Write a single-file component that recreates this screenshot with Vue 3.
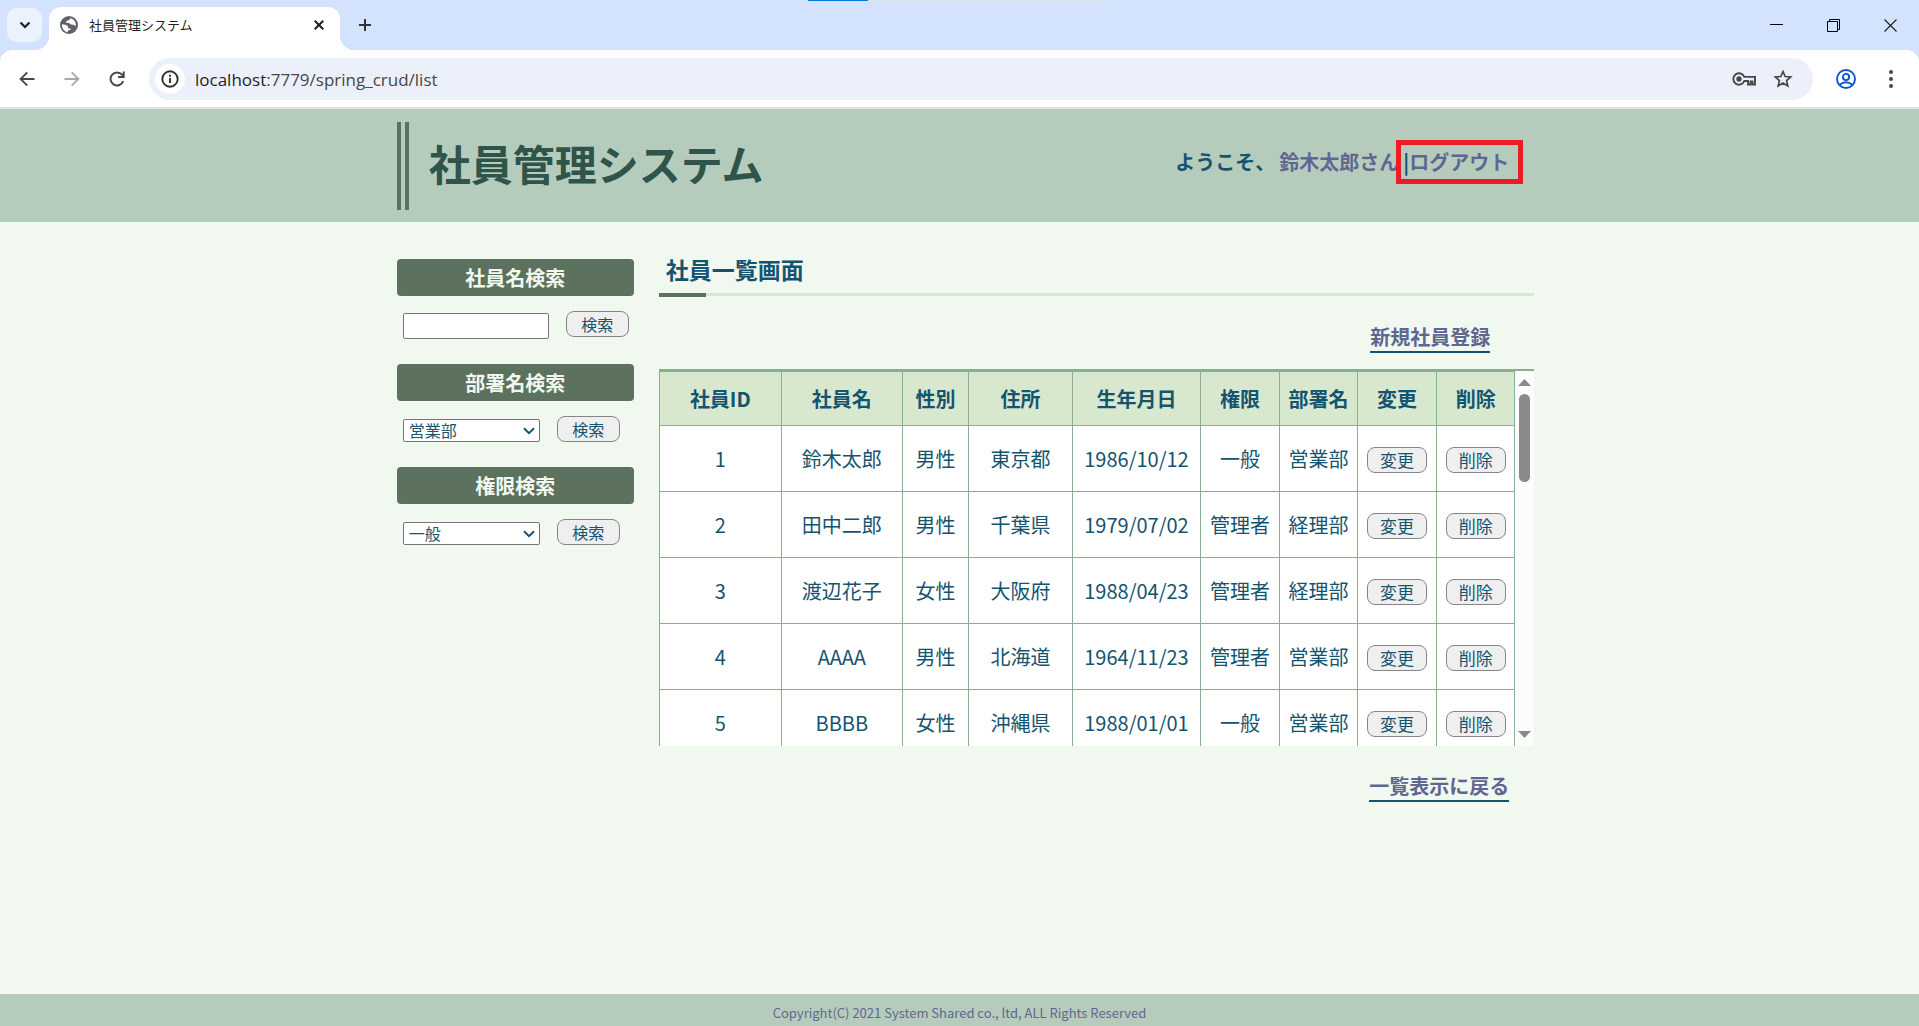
<script setup>
import { ref } from 'vue'

const columns = [
  { label: '社員ID', width: 122 },
  { label: '社員名', width: 121 },
  { label: '性別', width: 66 },
  { label: '住所', width: 104 },
  { label: '生年月日', width: 128 },
  { label: '権限', width: 79 },
  { label: '部署名', width: 78 },
  { label: '変更', width: 79 },
  { label: '削除', width: 78 },
]

const employees = [
  ['1', '鈴木太郎', '男性', '東京都', '1986/10/12', '一般', '営業部'],
  ['2', '田中二郎', '男性', '千葉県', '1979/07/02', '管理者', '経理部'],
  ['3', '渡辺花子', '女性', '大阪府', '1988/04/23', '管理者', '経理部'],
  ['4', 'AAAA', '男性', '北海道', '1964/11/23', '管理者', '営業部'],
  ['5', 'BBBB', '女性', '沖縄県', '1988/01/01', '一般', '営業部'],
]

const name = ref('')
const department = ref('営業部')
const authority = ref('一般')
</script>

<template>
  <div class="window">
    <div class="tabstrip">
      <div class="loading"><span></span></div>
      <button class="tab-search" aria-label="タブを検索">
        <svg width="12" height="8" viewBox="0 0 12 8"><path d="M1.5 1.5 6 6l4.500-4.500" fill="none" stroke="#1f1f1f" stroke-width="2.200" /></svg>
      </button>
      <div class="tab">
        <svg class="favicon" width="18" height="18" viewBox="0 0 18 18">
          <circle cx="9" cy="9" r="9" fill="#5f6368" />
          <path d="M10.500 2.200 9 4.200 6.500 4.800 6 6.800l3 .2 2 1.500 2.300.3 2.600 1.200a7.200 7.200 0 0 0-5.400-7.800z" fill="#fff" />
          <path d="M2 8.200l3.500.5 2.500 1.500v2l2.500.3v1.300l-2.300.7-.8 1.700A7.200 7.200 0 0 1 2 8.200z" fill="#fff" />
        </svg>
        <span class="tab-title">社員管理システム</span>
        <button class="plain" aria-label="タブを閉じる">
          <svg width="10" height="10" viewBox="0 0 10 10"><path d="M.7.7l8.600 8.600M9.300.7.700 9.300" stroke="#1f1f1f" stroke-width="2" /></svg>
        </button>
      </div>
      <button class="plain new-tab" aria-label="新しいタブ">
        <svg width="12" height="12" viewBox="0 0 12 12"><path d="M6 0v12M0 6h12" stroke="#333" stroke-width="2" /></svg>
      </button>
      <div class="window-buttons">
        <button class="plain" aria-label="最小化">
          <svg width="13" height="13" viewBox="0 0 13 13"><path d="M0 5.500h13" stroke="#000" /></svg>
        </button>
        <button class="plain" aria-label="元に戻す">
          <svg width="13" height="13" viewBox="0 0 13 13"><path d="M.5 2.500h10v10H.5zM2.500 2.500v-2h10v10h-2" fill="none" stroke="#000" /></svg>
        </button>
        <button class="plain" aria-label="閉じる">
          <svg width="13" height="13" viewBox="0 0 13 13"><path d="M.5.5l12 12M12.500.5l-12 12" stroke="#222" stroke-width="1.200" /></svg>
        </button>
      </div>
    </div>

    <div class="toolbar">
      <div class="nav-buttons">
        <button class="plain" aria-label="戻る">
          <svg width="16" height="16" viewBox="0 0 16 16"><path d="M15.500 8H2M8.300 1.300 1.600 8l6.700 6.700" fill="none" stroke="#474747" stroke-width="1.900" /></svg>
        </button>
        <button class="plain" aria-label="進む">
          <svg width="16" height="16" viewBox="0 0 16 16"><path d="M.5 8H14M7.700 1.300 14.400 8l-6.700 6.700" fill="none" stroke="#a9a9a9" stroke-width="1.900" /></svg>
        </button>
        <button class="plain" aria-label="再読み込み">
          <svg width="16" height="16" viewBox="0 0 16 16"><path d="M14.200 10A6.500 6.500 0 1 1 13 3.700l1.500 1.700M14.700.5v5.600H9.100" fill="none" stroke="#474747" stroke-width="2" /></svg>
        </button>
      </div>
      <div class="omnibox">
        <span class="info">
          <svg width="18" height="18" viewBox="0 0 18 18"><circle cx="9" cy="9" r="7.700" fill="none" stroke="#303030" stroke-width="1.900" /><path d="M9 8v5M9 4.800v1.900" stroke="#303030" stroke-width="1.900" /></svg>
        </span>
        <span class="url">localhost<span>:7779/spring_crud/list</span></span>
        <button class="plain" aria-label="パスワード">
          <svg width="24" height="14" viewBox="0 0 24 14"><path d="M12.300 4.900A5.700 5.700 0 1 0 12.300 9H16v3.500h2.500V9.500h2v3H23V4.900z" fill="none" stroke="#474747" stroke-width="1.900" /><circle cx="7" cy="7" r="2.700" fill="#474747" /></svg>
        </button>
        <button class="plain" aria-label="ブックマーク">
          <svg width="20" height="20" viewBox="0 0 20 20"><path d="M10 2.500l2.200 5 5.500.5-4.100 3.600 1.200 5.400-4.800-2.900L5.200 17l1.200-5.400L2.300 8l5.500-.5z" fill="none" stroke="#474747" stroke-width="1.700" /></svg>
        </button>
      </div>
      <button class="plain profile" aria-label="プロフィール">
        <svg width="20" height="20" viewBox="0 0 20 20" fill="none" stroke="#0b57d0" stroke-width="1.900"><circle cx="10" cy="10" r="9" /><circle cx="10" cy="8" r="3.100" /><path d="M3.700 15.800Q10 10.800 16.300 15.800" /></svg>
      </button>
      <button class="plain more" aria-label="メニュー">
        <svg width="4" height="18" viewBox="0 0 4 18" fill="#474747"><circle cx="2" cy="2" r="2" /><circle cx="2" cy="9" r="2" /><circle cx="2" cy="16" r="2" /></svg>
      </button>
    </div>

    <header class="site-header">
      <div class="container header-inner">
        <h1>社員管理システム</h1>
        <div class="welcome">
          <span class="greeting">ようこそ、</span>
          <a href="#">鈴木太郎さん</a>
          <span class="logout">|<a href="#">ログアウト</a></span>
        </div>
      </div>
    </header>

    <div class="container content">
      <aside>
        <form @submit.prevent>
          <label for="name">社員名検索</label>
          <div class="search-row text-row">
            <input id="name" v-model="name" type="text" />
            <button class="btn">検索</button>
          </div>
        </form>
        <form @submit.prevent>
          <label for="department">部署名検索</label>
          <div class="search-row">
            <span class="select">
              <select id="department" v-model="department">
                <option>営業部</option>
                <option>経理部</option>
              </select>
              <svg width="12" height="8" viewBox="0 0 12 8"><path d="M1 1.200l5 5 5-5" fill="none" stroke="#15546f" stroke-width="2" /></svg>
            </span>
            <button class="btn">検索</button>
          </div>
        </form>
        <form @submit.prevent>
          <label for="authority">権限検索</label>
          <div class="search-row">
            <span class="select">
              <select id="authority" v-model="authority">
                <option>一般</option>
                <option>管理者</option>
              </select>
              <svg width="12" height="8" viewBox="0 0 12 8"><path d="M1 1.200l5 5 5-5" fill="none" stroke="#15546f" stroke-width="2" /></svg>
            </span>
            <button class="btn">検索</button>
          </div>
        </form>
      </aside>

      <main>
        <h2>社員一覧画面</h2>
        <div class="link-row register"><a href="#">新規社員登録</a></div>
        <div class="list">
          <div class="viewport">
            <table>
              <colgroup>
                <col v-for="c in columns" :key="c.label" :style="{ width: c.width + 'px' }" />
              </colgroup>
              <thead>
                <tr>
                  <th v-for="c in columns" :key="c.label">{{ c.label }}</th>
                </tr>
              </thead>
              <tbody>
                <tr v-for="e in employees" :key="e[0]">
                  <td v-for="(v, i) in e" :key="i">{{ v }}</td>
                  <td><button class="btn">変更</button></td>
                  <td><button class="btn">削除</button></td>
                </tr>
              </tbody>
            </table>
          </div>
          <div class="scrollbar">
            <svg width="13" height="7" viewBox="0 0 13 7"><path d="M6.500 0 13 7H0z" fill="#8a8a8a" /></svg>
            <span class="thumb"></span>
            <svg class="down" width="13" height="7" viewBox="0 0 13 7"><path d="M0 0h13L6.500 7z" fill="#8a8a8a" /></svg>
          </div>
        </div>
        <div class="link-row back"><a href="#">一覧表示に戻る</a></div>
      </main>
    </div>

    <footer>Copyright(C) 2021 System Shared co., ltd, ALL Rights Reserved</footer>
  </div>
</template>

<style>
body {
  margin: 0;
}
</style>

<style scoped>
* {
  box-sizing: border-box;
}

.window {
  display: flex;
  flex-direction: column;
  min-height: 100vh;
  background: #f1f8f0;
  color: #15546f;
  font: 20px/30px 'Noto Sans CJK JP', sans-serif;
}

svg {
  display: block;
}

button,
input,
select {
  font: inherit;
  color: inherit;
}

.plain {
  display: flex;
  padding: 0;
  border: 0;
  background: none;
}

/* browser frame */
.tabstrip {
  position: relative;
  display: flex;
  align-items: center;
  height: 50px;
  padding-left: 7px;
  background: #d3e3fd;
}

.loading {
  position: absolute;
  top: 0;
  left: 808px;
  width: 301px;
  height: 1px;
  background: #e5e5e5;
}

.loading span {
  display: block;
  width: 60px;
  height: 1px;
  background: #0078d7;
}

.tab-search {
  display: flex;
  align-items: center;
  justify-content: center;
  width: 35px;
  height: 34px;
  border: 0;
  border-radius: 10px;
  background: #ebf1fd;
}

.tab {
  position: relative;
  display: flex;
  align-items: center;
  align-self: flex-end;
  width: 291px;
  height: 43px;
  margin-left: 7px;
  padding: 0 16px 7px 11px;
  border-radius: 12px 12px 0 0;
  background: #fff;
}

.tab::before,
.tab::after {
  content: '';
  position: absolute;
  bottom: 0;
  width: 14px;
  height: 14px;
}

.tab::before {
  right: 100%;
  background: radial-gradient(circle at 0 0, transparent 14px, #fff 14px);
}

.tab::after {
  left: 100%;
  background: radial-gradient(circle at 100% 0, transparent 14px, #fff 14px);
}

.tab-title {
  flex: 1;
  margin-left: 11px;
  color: #1f1f1f;
  font-size: 13px;
  line-height: 20px;
}

.new-tab {
  margin-left: 19px;
}

.window-buttons {
  display: flex;
  gap: 44px;
  margin-left: auto;
  padding-right: 22px;
}

.toolbar {
  display: flex;
  align-items: center;
  height: 59px;
  padding: 0 26px 0 19px;
  border-bottom: 2px solid #e1e4e1;
  background: radial-gradient(circle at 12px 12px, #fff 12px, #d3e3fd 12px) 0 0 / 12px 12px no-repeat,
    radial-gradient(circle at 0 12px, #fff 12px, #d3e3fd 12px) 100% 0 / 12px 12px no-repeat,
    #fff;
}

.nav-buttons {
  display: flex;
  gap: 29px;
}

.omnibox {
  display: flex;
  flex: 1;
  align-items: center;
  gap: 17px;
  height: 42px;
  margin-left: 24px;
  padding: 0 20px 0 6px;
  border-radius: 21px;
  background: #ebf0fa;
}

.info {
  display: flex;
  align-items: center;
  justify-content: center;
  width: 30px;
  height: 30px;
  border-radius: 50%;
  background: #fff;
}

.url {
  flex: 1;
  margin-left: -7px;
  padding-top: 2px;
  color: #1f1f1f;
  font: 17px/24px 'Open Sans', sans-serif;
}

.url span {
  color: #474747;
}

.profile {
  margin-left: 23px;
}

.more {
  margin-left: 33px;
}

/* page */
.container {
  width: 60%;
  margin: 0 auto;
  padding: 0 1px 0 13px;
}

.site-header {
  padding: 13px 0 12px;
  background: #b5ccbc;
}

.header-inner {
  display: flex;
  align-items: center;
  justify-content: space-between;
}

h1 {
  margin: 0;
  padding: 0 0 6px 20px;
  border-left: 12px double #5d725e;
  color: #2f544a;
  font-size: 42px;
  line-height: 82px;
}

a {
  color: #5f6790;
  font-weight: bold;
  text-decoration: none;
}

.welcome {
  display: flex;
  align-items: center;
  margin: 0 11px 8px 0;
  font-weight: bold;
}

.greeting {
  margin-right: 4px;
}

.logout {
  margin-left: -3px;
  padding: 2px 9px 2px 2px;
  border: 5px solid #ed1c24;
}

.content {
  display: flex;
  flex: 1;
  gap: 25px;
}

aside {
  width: 237px;
  padding-top: 37px;
}

label {
  display: block;
  border-radius: 4px;
  background: #5d725e;
  color: #f1f8f0;
  font-weight: bold;
  line-height: 37px;
  text-align: center;
}

.search-row {
  display: flex;
  align-items: flex-end;
  gap: 17px;
  height: 41px;
  margin: 0 0 25px 6px;
}

.text-row {
  height: 43px;
}

.text-row .btn {
  margin-bottom: 2px;
}

input {
  width: 146px;
  height: 26px;
  border: 1px solid #767676;
  border-radius: 2px;
  background: #fff;
}

.btn {
  width: 63px;
  height: 26px;
  padding: 0;
  border: 1px solid #858585;
  border-radius: 8px;
  background: #efefef;
  font-size: 16px;
  line-height: 24px;
}

.select {
  position: relative;
  width: 137px;
}

select {
  display: block;
  width: 100%;
  height: 23px;
  padding: 0 5px;
  border: 1px solid #767676;
  border-radius: 2px;
  background: #fff;
  font-size: 16px;
  line-height: 21px;
  appearance: none;
}

.select svg {
  position: absolute;
  top: 8px;
  right: 5px;
  pointer-events: none;
}

main {
  flex: 1;
  min-width: 0;
}

h2 {
  position: relative;
  margin: 31px 0 0;
  padding: 0 7px 8px;
  border-bottom: 3px solid #d8e8cf;
  font-size: 23px;
  line-height: 32px;
}

h2::after {
  content: '';
  position: absolute;
  top: 40px;
  left: 0;
  width: 47px;
  height: 4px;
  background: #5d725e;
}

.link-row {
  display: flex;
  justify-content: flex-end;
}

.link-row a {
  border-bottom: 2px solid #15546f;
  line-height: 28px;
}

.register {
  padding: 27px 44px 16px 0;
}

.back {
  padding: 26px 25px 0 0;
}

.list {
  display: flex;
  height: 377px;
  border-top: 2px solid #8bae92;
}

.viewport {
  flex: 1;
  overflow: hidden;
}

table {
  width: 100%;
  table-layout: fixed;
  border-collapse: collapse;
  background: #fff;
  text-align: center;
}

th,
td {
  height: 66px;
  padding: 0;
  border: 1px solid #8bae92;
}

th {
  height: 54px;
  background: #d8e8cf;
}

td .btn {
  width: 60px;
  font-size: 17px;
}

.scrollbar {
  display: flex;
  flex-direction: column;
  align-items: center;
  width: 19px;
  padding: 8px 0;
  background: #fcfcfc;
}

.thumb {
  width: 11px;
  height: 88px;
  margin-top: 8px;
  border-radius: 6px;
  background: #8a8a8a;
}

.down {
  margin-top: auto;
}

footer {
  height: 32px;
  padding-top: 4px;
  overflow: hidden;
  background: #b5ccbc;
  color: #5f6790;
  font-size: 13px;
  text-align: center;
}
</style>
